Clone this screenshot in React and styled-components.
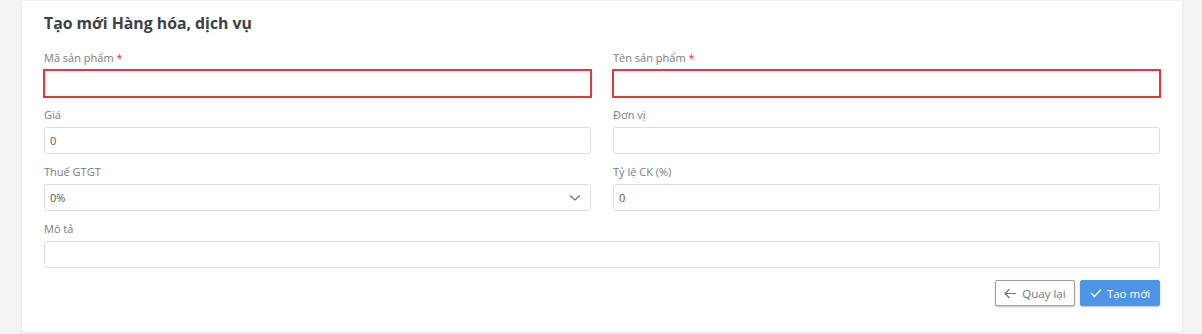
import React from "react";
import styled, { createGlobalStyle } from "styled-components";

const Global = createGlobalStyle`
  html, body { margin: 0; padding: 0; background: #f4f4f4; }
  body { font-family: "Open Sans", "Liberation Sans", sans-serif; }
  * { box-sizing: border-box; }
`;

const Page = styled.div`
  padding: 1px 20px 2px 22px;
  min-height: 334px;
`;

const Card = styled.div`
  background: #fff;
  border-radius: 3px;
  box-shadow: 0 1px 3px rgba(0, 0, 0, 0.08);
  padding: 11px 22px 26px 22px;
`;

const Title = styled.h2`
  margin: 0 0 16px 0;
  font-size: 15.8px;
  line-height: 22px;
  font-weight: 700;
  color: #3b4148;
`;

const Grid = styled.div`
  display: grid;
  grid-template-columns: 1fr 1fr;
  column-gap: 22px;
  row-gap: 10px;
`;

const Field = styled.div`
  display: flex;
  flex-direction: column;
  grid-column: ${(p) => (p.$full ? "1 / -1" : "auto")};
`;

const Label = styled.label`
  font-size: 11px;
  line-height: 16px;
  color: #767c82;
  margin-bottom: 4px;
  span { color: #e0393e; }
`;

const InputBox = styled.div`
  position: relative;
  height: 27px;
  border: 1px solid ${(p) => (p.$invalid ? "#e53935" : "#dedede")};
  box-shadow: ${(p) => (p.$invalid ? "0 0 0 1px #e53935" : "none")};
  border-radius: ${(p) => (p.$invalid ? "0" : "3px")};
  background: #fff;
  display: flex;
  align-items: center;
  padding: 0 ${(p) => (p.$select ? "30px" : "8px")} 0 5px;
  font-size: 11px;
  color: #555b61;
`;

const Chevron = styled.svg`
  position: absolute;
  right: 9px;
  top: 50%;
  transform: translateY(-50%);
`;

const Actions = styled.div`
  display: flex;
  justify-content: flex-end;
  gap: 5px;
  margin-top: 12px;
`;

const Button = styled.button`
  width: 80px;
  height: 26px;
  display: inline-flex;
  align-items: center;
  justify-content: center;
  gap: 5px;
  font-family: inherit;
  font-size: 11.5px;
  border-radius: 2px;
  cursor: pointer;
  border: 1px solid ${(p) => (p.$primary ? "#4d94e6" : "#9aa0a6")};
  background: ${(p) => (p.$primary ? "#4d94e6" : "#fff")};
  color: ${(p) => (p.$primary ? "#fff" : "#6f757b")};
  box-shadow: 0 1px 2px rgba(0, 0, 0, 0.25);
  padding: 0;
`;

const Input = ({ invalid, select, children }) => (
  <InputBox $invalid={invalid} $select={select}>
    {children}
    {select && (
      <Chevron width="12" height="8" viewBox="0 0 12 8" fill="none">
        <path d="M1 1.5 L6 6 L11 1.5" stroke="#6b7177" strokeWidth="1.3" />
      </Chevron>
    )}
  </InputBox>
);

export default function App() {
  return (
    <>
      <Global />
      <Page>
        <Card>
          <Title>Tạo mới Hàng hóa, dịch vụ</Title>
          <Grid>
            <Field>
              <Label>Mã sản phẩm <span>*</span></Label>
              <Input invalid />
            </Field>
            <Field>
              <Label>Tên sản phẩm <span>*</span></Label>
              <Input invalid />
            </Field>
            <Field>
              <Label>Giá</Label>
              <Input>0</Input>
            </Field>
            <Field>
              <Label>Đơn vị</Label>
              <Input />
            </Field>
            <Field>
              <Label>Thuế GTGT</Label>
              <Input select>0%</Input>
            </Field>
            <Field>
              <Label>Tỷ lệ CK (%)</Label>
              <Input>0</Input>
            </Field>
            <Field $full>
              <Label>Mô tả</Label>
              <Input />
            </Field>
          </Grid>
          <Actions>
            <Button>
              <svg width="13" height="11" viewBox="0 0 13 11" fill="none">
                <path d="M12 5.5 H1.5 M5.5 1 L1 5.5 L5.5 10" stroke="#6f757b" strokeWidth="1.2" />
              </svg>
              Quay lại
            </Button>
            <Button $primary>
              <svg width="12" height="10" viewBox="0 0 12 10" fill="none">
                <path d="M1 5 L4.5 8.5 L11 1.5" stroke="#fff" strokeWidth="1.3" />
              </svg>
              Tạo mới
            </Button>
          </Actions>
        </Card>
      </Page>
    </>
  );
}
